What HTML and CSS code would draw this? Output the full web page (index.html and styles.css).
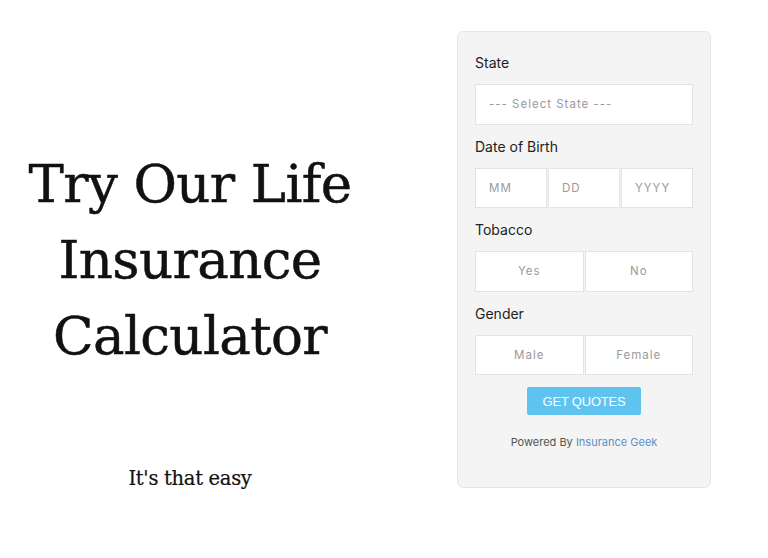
FILE: index.html
```html
<!DOCTYPE html>
<html lang="en">
<head>
<meta charset="utf-8">
<title>Life Insurance Calculator</title>
<link rel="stylesheet" href="styles.css">
</head>
<body>
<main class="page">
  <section class="intro">
    <h1 class="title">Try Our Life<br>Insurance<br>Calculator</h1>
    <p class="tagline">It's that easy</p>
  </section>
  <form class="panel">
    <div class="field">
      <label class="label">State</label>
      <div class="box select">--- Select State ---</div>
    </div>
    <div class="field">
      <label class="label">Date of Birth</label>
      <div class="row">
        <div class="box cell left">MM</div>
        <div class="box cell left">DD</div>
        <div class="box cell left">YYYY</div>
      </div>
    </div>
    <div class="field">
      <label class="label">Tobacco</label>
      <div class="row">
        <div class="box cell">Yes</div>
        <div class="box cell">No</div>
      </div>
    </div>
    <div class="field">
      <label class="label">Gender</label>
      <div class="row">
        <div class="box cell">Male</div>
        <div class="box cell">Female</div>
      </div>
    </div>
    <div class="actions">
      <button type="button" class="btn">GET QUOTES</button>
    </div>
    <p class="powered">Powered By <span class="brand">Insurance Geek</span></p>
  </form>
</main>
</body>
</html>
```

FILE: styles.css
```css
* { box-sizing: border-box; }
html, body { margin: 0; padding: 0; background: #fff; }
.page {
  display: flex;
  align-items: flex-start;
  width: 768px;
  height: 558px;
}
.intro {
  width: 380px;
  padding-top: 146px;
  text-align: center;
  color: #111;
}
.title {
  margin: 0;
  font-family: "DejaVu Serif", Georgia, serif;
  font-weight: normal;
  font-size: 53px;
  line-height: 76px;
  letter-spacing: -0.6px;
  -webkit-text-stroke: 0.5px #111;
}
.tagline {
  margin: 93px 0 0;
  font-family: "DejaVu Serif", Georgia, serif;
  font-size: 19.5px;
  letter-spacing: -0.3px;
  -webkit-text-stroke: 0.2px #111;
}
.panel {
  margin: 31px 0 0 77px;
  width: 254px;
  height: 457px;
  background: #f4f4f4;
  border: 1px solid #e6e6e6;
  border-radius: 6px;
  padding: 21px 17px 0 17px;
  font-family: Inter, "Noto Sans", sans-serif;
}
.field { margin-bottom: 12px; }
.label {
  display: block;
  height: 20px;
  line-height: 20px;
  font-size: 14px;
  color: #222;
  margin-bottom: 11px;
}
.box {
  height: 40.5px;
  background: #fff;
  border: 1px solid #e3e3e3;
  color: #9a9a9a;
  font-size: 11.5px;
  letter-spacing: 1px;
  display: flex;
  align-items: center;
}
.select { padding-left: 13px; }
.row { display: flex; }
.cell { flex: 1; justify-content: center; }
.cell + .cell { margin-left: 1px; }
.cell.left { justify-content: flex-start; padding-left: 13px; }
.actions {
  display: flex;
  justify-content: center;
  margin-top: 3px;
}
.btn {
  width: 114px;
  height: 28px;
  border: none;
  border-radius: 2px;
  background: #5ec4ef;
  color: #fff;
  font-family: "Liberation Sans", Arial, sans-serif;
  font-size: 13px;
  letter-spacing: -0.2px;
  padding: 0;
}
.powered {
  margin: 19px 0 0;
  text-align: center;
  font-size: 11px;
  color: #555;
  line-height: 16px;
}
.brand { color: #5b8fc7; }
```
